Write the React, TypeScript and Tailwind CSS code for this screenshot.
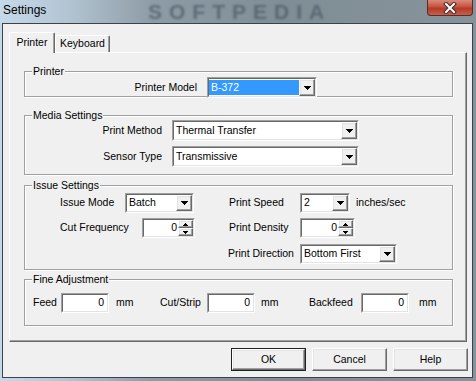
import React from "react";

const sunken = "border border-t-[#a0a0a0] border-l-[#a0a0a0] border-r-white border-b-white";
const sunkenInner = "border border-t-[#696969] border-l-[#696969] border-r-[#e3e3e3] border-b-[#e3e3e3] bg-white";
const raised =
  "border border-t-white border-l-white border-r-[#696969] border-b-[#696969] shadow-[inset_-1px_-1px_0_#a0a0a0,inset_1px_1px_0_#e3e3e3] bg-[#f0f0f0]";

function Arrow() {
  return (
    <svg width="7" height="4" viewBox="0 0 7 4" shapeRendering="crispEdges">
      <rect x="0" y="0" width="7" height="1" fill="#000" />
      <rect x="1" y="1" width="5" height="1" fill="#000" />
      <rect x="2" y="2" width="3" height="1" fill="#000" />
      <rect x="3" y="3" width="1" height="1" fill="#000" />
    </svg>
  );
}

function SmallArrow({ up }: { up?: boolean }) {
  return (
    <svg width="5" height="3" viewBox="0 0 5 3" shapeRendering="crispEdges">
      {up ? (
        <>
          <rect x="2" y="0" width="1" height="1" fill="#000" />
          <rect x="1" y="1" width="3" height="1" fill="#000" />
          <rect x="0" y="2" width="5" height="1" fill="#000" />
        </>
      ) : (
        <>
          <rect x="0" y="0" width="5" height="1" fill="#000" />
          <rect x="1" y="1" width="3" height="1" fill="#000" />
          <rect x="2" y="2" width="1" height="1" fill="#000" />
        </>
      )}
    </svg>
  );
}

function Combo({ value, className, selected }: { value: string; className: string; selected?: boolean }) {
  return (
    <div className={`${className} ${sunken} flex relative z-10`}>
      <div className={`${sunkenInner} flex-1 flex`}>
        <div className="flex-1 flex py-[1px]">
          <span className={`flex-1 flex items-center pl-[2px] ${selected ? "bg-[#3399ff] text-white" : ""}`}>{value}</span>
        </div>
        <div className={`w-[16px] flex items-center justify-center ${raised}`}>
          <Arrow />
        </div>
      </div>
    </div>
  );
}

function Spin({ className }: { className: string }) {
  return (
    <div className={`${className} h-[20px] ${sunken} flex`}>
      <div className={`${sunkenInner} flex-1 flex`}>
        <div className="flex-1 flex items-center justify-end pr-[1px]">0</div>
        <div className="w-[15px] flex flex-col">
          <div className={`flex-1 flex items-center justify-center ${raised}`}>
            <SmallArrow up />
          </div>
          <div className={`flex-1 flex items-center justify-center ${raised}`}>
            <SmallArrow />
          </div>
        </div>
      </div>
    </div>
  );
}

function Edit() {
  return (
    <div className={`w-[48px] h-[20px] ${sunken} flex`}>
      <div className={`${sunkenInner} flex-1 flex items-center justify-end pr-[3px]`}>0</div>
    </div>
  );
}

function Group({ title, className, children }: { title: string; className: string; children?: React.ReactNode }) {
  return (
    <div
      className={`relative w-[429px] border border-[#a0a0a0] shadow-[inset_1px_1px_0_#fff,1px_1px_0_#fff] ${className}`}
    >
      <span className="absolute left-[7px] -top-[7px] px-[1px] leading-[13px] bg-[#f0f0f0]">{title}</span>
      {children}
    </div>
  );
}

function Btn({ label, isDefault }: { label: string; isDefault?: boolean }) {
  if (isDefault) {
    return (
      <div className="w-[75px] h-[23px] border border-[#202020] flex">
        <div className={`flex-1 flex items-center justify-center ${raised}`}>{label}</div>
      </div>
    );
  }
  return <div className={`w-[75px] h-[23px] flex items-center justify-center ${raised}`}>{label}</div>;
}

export default function App() {
  return (
    <div className="w-[476px] h-[381px] overflow-hidden relative bg-[linear-gradient(90deg,#c6d9ea_0%,#b3c5d3_14%,#8e9ca6_32%,#7f8d95_60%,#86939a_100%)] font-['Liberation_Sans',Arial,sans-serif] text-[10.5px] text-black">
      {/* title bar */}
      <div className="relative h-[23px] pl-[3px] pt-[3px]">
        <span
          aria-hidden
          className="absolute left-[148px] top-0 text-[21px] leading-[23px] font-bold tracking-[7px] text-[#3f505c]/60 blur-[1px] select-none"
        >
          SOFTPEDIA
        </span>
        <span className="relative text-[12px] leading-[14px]">Settings</span>
        <div className="absolute right-[3px] top-0 w-[46px] h-[16px] rounded-b-[4px] border border-t-0 border-[#5a2a25] bg-[linear-gradient(180deg,#d98a7c_0%,#c8523f_45%,#b33a26_55%,#c4604c_100%)] flex items-center justify-center">
          <svg width="14" height="12" viewBox="0 0 14 12">
            <path d="M3 2 L11 10 M11 2 L3 10" stroke="#3a2a2a" strokeWidth="4" strokeLinecap="square" />
            <path d="M3 2 L11 10 M11 2 L3 10" stroke="#fff" strokeWidth="2" strokeLinecap="square" />
          </svg>
        </div>
      </div>

      {/* client */}
      <div className="relative ml-[2px] w-[471px] h-[355px] border border-[#3b4249] bg-[#f0f0f0]">
        {/* tabs */}
        <div className="h-[28px] pl-[6px] flex items-end">
          <div className="relative z-20 -mb-[1px] h-[21px] w-[46px] bg-[#f0f0f0] border border-b-0 border-t-white border-l-white border-r-[#696969] rounded-t-[2px] shadow-[inset_-1px_0_0_#a0a0a0] flex items-center justify-center pb-[1px]">
            Printer
          </div>
          <div className="h-[17px] w-[55px] bg-[#f0f0f0] border border-b-0 border-t-white border-l-white border-r-[#696969] rounded-t-[2px] shadow-[inset_-1px_0_0_#a0a0a0] flex items-center justify-center">
            Keyboard
          </div>
        </div>

        {/* tab page */}
        <div className="ml-[6px] w-[458px] h-[290px] border border-t-white border-l-white border-r-[#696969] border-b-[#696969] shadow-[inset_-1px_-1px_0_#a0a0a0] pt-[18px] pl-[14px]">
          <Group title="Printer" className="h-[26px]">
            <div className="mt-[5px] flex items-center">
              <span className="w-[172px] text-right">Printer Model</span>
              <Combo value="B-372" className="ml-[10px] w-[110px] h-[21px]" selected />
            </div>
          </Group>

          <Group title="Media Settings" className="mt-[18px] h-[60px]">
            <div className="mt-[4px] flex flex-col gap-[5px]">
              <div className="flex items-center">
                <span className="w-[137px] text-right">Print Method</span>
                <Combo value="Thermal Transfer" className="ml-[10px] w-[187px] h-[21px]" />
              </div>
              <div className="flex items-center">
                <span className="w-[137px] text-right">Sensor Type</span>
                <Combo value="Transmissive" className="ml-[10px] w-[187px] h-[21px]" />
              </div>
            </div>
          </Group>

          <Group title="Issue Settings" className="mt-[10px] h-[85px]">
            <div className="mt-[7px] pl-[35px] flex">
              <div className="w-[169px] flex flex-col gap-[5px]">
                <div className="flex items-center">
                  <span className="w-[65px]">Issue Mode</span>
                  <Combo value="Batch" className="w-[69px] h-[20px]" />
                </div>
                <div className="flex items-center">
                  <span className="w-[82px]">Cut Frequency</span>
                  <Spin className="w-[53px]" />
                </div>
              </div>
              <div className="flex flex-col gap-[5px]">
                <div className="flex items-center">
                  <span className="w-[71px]">Print Speed</span>
                  <Combo value="2" className="w-[50px] h-[20px]" />
                  <span className="ml-[6px]">inches/sec</span>
                </div>
                <div className="flex items-center">
                  <span className="w-[71px]">Print Density</span>
                  <Spin className="w-[55px]" />
                </div>
                <div className="mt-[1px] flex items-center">
                  <span className="w-[71px] -ml-[1px]">Print Direction</span>
                  <Combo value="Bottom First" className="ml-[1px] w-[97px] h-[20px]" />
                </div>
              </div>
            </div>
          </Group>

          <Group title="Fine Adjustment" className="mt-[9px] h-[47px]">
            <div className="mt-[13px] pl-[8px] flex items-center">
              <span className="w-[28px]">Feed</span>
              <Edit />
              <span className="ml-[7px] w-[44px]">mm</span>
              <span className="w-[47px]">Cut/Strip</span>
              <Edit />
              <span className="ml-[6px] w-[48px]">mm</span>
              <span className="w-[52px]">Backfeed</span>
              <Edit />
              <span className="ml-[10px]">mm</span>
            </div>
          </Group>
        </div>

        {/* buttons */}
        <div className="mt-[6px] pr-[4px] flex justify-end gap-[6px]">
          <Btn label="OK" isDefault />
          <Btn label="Cancel" />
          <Btn label="Help" />
        </div>
      </div>
    </div>
  );
}
